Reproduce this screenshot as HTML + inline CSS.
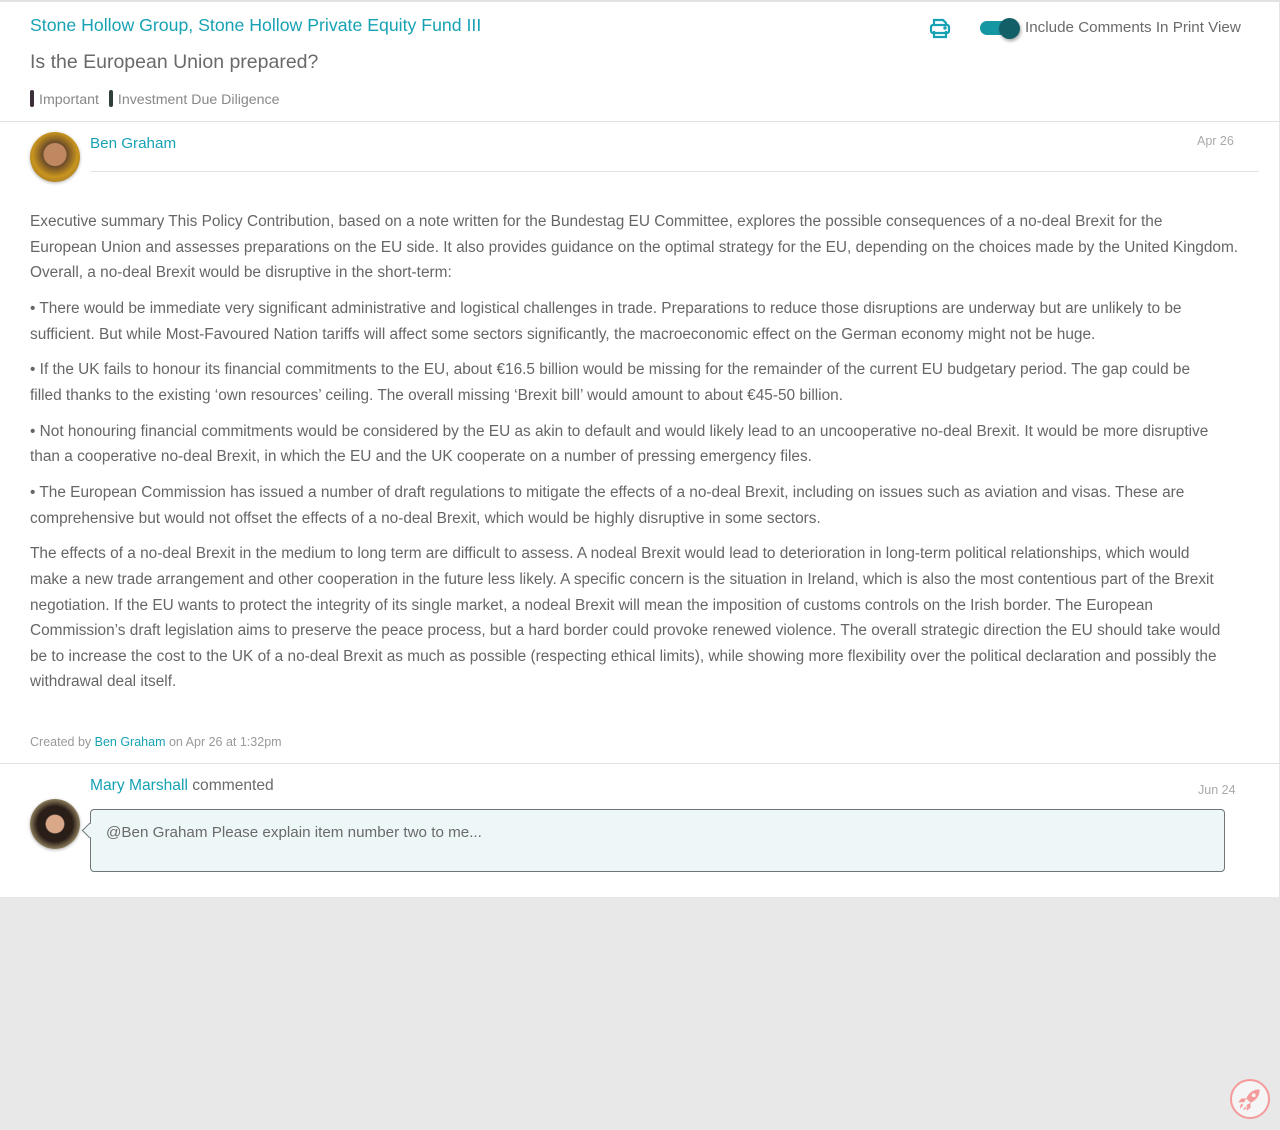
<!DOCTYPE html>
<html><head><meta charset="utf-8"><style>
*{margin:0;padding:0;box-sizing:border-box}
body{width:1280px;height:1130px;background:#e8e8e8;font-family:"Liberation Sans",sans-serif;color:#666;position:relative;overflow:hidden}
.white{position:absolute;left:0;top:0;width:1280px;height:897px;background:#fff;border-top:2px solid #e2e2e2;border-right:1px solid #e4e4e4}
.a{position:absolute;white-space:nowrap}
.teal{color:#17a2b4}
.hr{position:absolute;height:1px;background:#e2e2e2}
.body{position:absolute;left:30px;top:209px;font-size:15.4px;line-height:25.6px;color:#666}
.body div{white-space:nowrap}
.body .p{margin-bottom:10.2px}
.tag{display:inline-block;width:4px;height:17px;border-radius:2px;vertical-align:-3px;margin-right:5px}
</style></head><body>
<div class="white"></div>
<div class="a teal" style="left:30px;top:15px;font-size:17.7px">Stone Hollow Group, Stone Hollow Private Equity Fund III</div>
<div class="a" style="left:30px;top:51px;font-size:19.5px;color:#6a6a6a">Is the European Union prepared?</div>
<div class="a" style="left:30px;top:90px;font-size:14.2px;color:#888"><span class="tag" style="background:#3d2f3a"></span>Important <span class="tag" style="background:#2f3f3a;margin-left:6px"></span>Investment Due Diligence</div>
<svg class="a" style="left:929px;top:17px" width="22" height="22" viewBox="0 0 22 22" fill="none" stroke="#17a2b4" stroke-width="2.2"><path d="M5 8V3h9l3 3v2"/><rect x="2" y="8" width="18" height="8" rx="2"/><path d="M5 14v6h12v-6"/><circle cx="16" cy="11" r="0.6" fill="#17a2b4"/></svg>
<div class="a" style="left:980px;top:21px;width:38px;height:14px;border-radius:7px;background:#1597a3"></div>
<div class="a" style="left:999px;top:18px;width:21px;height:21px;border-radius:50%;background:#135f68;box-shadow:1px 2px 3px rgba(0,0,0,.35)"></div>
<div class="a" style="left:1025px;top:19px;font-size:15.2px;color:#6a6a6a">Include Comments In Print View</div>
<div class="hr" style="left:0;top:121px;width:1280px"></div>
<div class="a" style="left:30px;top:132px;width:50px;height:50px;border-radius:50%;background:radial-gradient(circle at 50% 45%,#c08860 0 30%,#6a4a2a 32%,#c8941e 60%,#8a6a30 100%);box-shadow:0 1px 3px rgba(0,0,0,.3)"></div>
<div class="a teal" style="left:90px;top:135px;font-size:15.2px">Ben Graham</div>
<div class="a" style="left:1197px;top:134px;font-size:12.5px;color:#aaa">Apr 26</div>
<div class="hr" style="left:90px;top:171px;width:1169px"></div>
<div class="body">
<div>Executive summary This Policy Contribution, based on a note written for the Bundestag EU Committee, explores the possible consequences of a no-deal Brexit for the</div>
<div>European Union and assesses preparations on the EU side. It also provides guidance on the optimal strategy for the EU, depending on the choices made by the United Kingdom.</div>
<div class="p">Overall, a no-deal Brexit would be disruptive in the short-term:</div>
<div>• There would be immediate very significant administrative and logistical challenges in trade. Preparations to reduce those disruptions are underway but are unlikely to be</div>
<div class="p">sufficient. But while Most-Favoured Nation tariffs will affect some sectors significantly, the macroeconomic effect on the German economy might not be huge.</div>
<div>• If the UK fails to honour its financial commitments to the EU, about €16.5 billion would be missing for the remainder of the current EU budgetary period. The gap could be</div>
<div class="p">filled thanks to the existing ‘own resources’ ceiling. The overall missing ‘Brexit bill’ would amount to about €45-50 billion.</div>
<div>• Not honouring financial commitments would be considered by the EU as akin to default and would likely lead to an uncooperative no-deal Brexit. It would be more disruptive</div>
<div class="p">than a cooperative no-deal Brexit, in which the EU and the UK cooperate on a number of pressing emergency files.</div>
<div>• The European Commission has issued a number of draft regulations to mitigate the effects of a no-deal Brexit, including on issues such as aviation and visas. These are</div>
<div class="p">comprehensive but would not offset the effects of a no-deal Brexit, which would be highly disruptive in some sectors.</div>
<div>The effects of a no-deal Brexit in the medium to long term are difficult to assess. A nodeal Brexit would lead to deterioration in long-term political relationships, which would</div>
<div>make a new trade arrangement and other cooperation in the future less likely. A specific concern is the situation in Ireland, which is also the most contentious part of the Brexit</div>
<div>negotiation. If the EU wants to protect the integrity of its single market, a nodeal Brexit will mean the imposition of customs controls on the Irish border. The European</div>
<div>Commission’s draft legislation aims to preserve the peace process, but a hard border could provoke renewed violence. The overall strategic direction the EU should take would</div>
<div>be to increase the cost to the UK of a no-deal Brexit as much as possible (respecting ethical limits), while showing more flexibility over the political declaration and possibly the</div>
<div>withdrawal deal itself.</div>
</div>
<div class="a" style="left:30px;top:735px;font-size:12.5px;color:#999">Created by <span class="teal">Ben Graham</span> on Apr 26 at 1:32pm</div>
<div class="hr" style="left:0;top:763px;width:1280px"></div>
<div class="a" style="left:90px;top:777px;font-size:15.6px;color:#6a6a6a"><span class="teal">Mary Marshall</span> commented</div>
<div class="a" style="left:1198px;top:783px;font-size:12.5px;color:#aaa">Jun 24</div>
<div class="a" style="left:30px;top:799px;width:50px;height:50px;border-radius:50%;background:radial-gradient(circle at 50% 50%,#d8a888 0 25%,#2a1e18 28% 50%,#8a7a5a 70%,#5a5040 100%);box-shadow:0 1px 3px rgba(0,0,0,.3)"></div>
<div class="a" style="left:90px;top:809px;width:1135px;height:63px;background:#eef7f8;border:1.5px solid #6f7578;border-radius:4px"></div>
<div class="a" style="left:84px;top:825px;width:11px;height:11px;background:#eef7f8;border-left:1.5px solid #6f7578;border-bottom:1.5px solid #6f7578;transform:rotate(45deg)"></div>
<div class="a" style="left:106px;top:824px;font-size:15.2px;color:#6a6a6a">@Ben Graham Please explain item number two to me...</div>
<div class="a" style="left:1230px;top:1079px;width:40px;height:40px;border-radius:50%;border:2.5px solid #f59a9a;background:#f5f5f5"></div>
<svg class="a" style="left:1235px;top:1084px" width="30" height="30" viewBox="0 0 28 28" fill="#f59a9a"><path d="M23 5c-6 0-10 3-12.5 8.5l4 4C20 15 23 11 23 5z"/><circle cx="17.5" cy="10.5" r="1.8" fill="#f5f5f5"/><path d="M10.5 13.5l-4.5 0-3 3.5 5.5 0zM14.5 17.5l0 4.5-3.5 3 0-5.5z"/><path d="M8 19.5l-3.5 4 1-5zM9.5 21l-2 3.5 3-1.5z"/></svg>
</body></html>
